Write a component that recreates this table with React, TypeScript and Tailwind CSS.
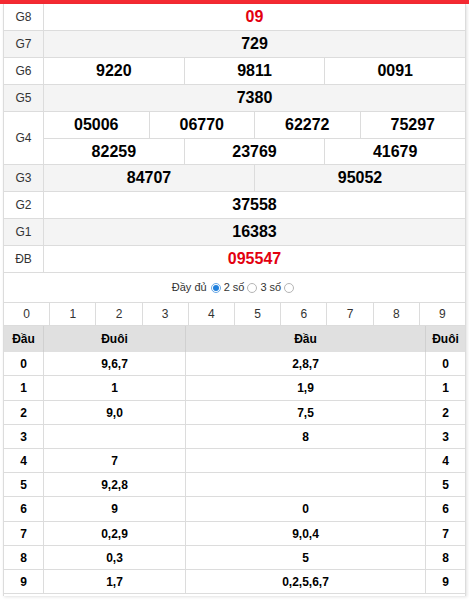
const prizes: { label: string; rows: string[][]; red?: boolean; gray?: boolean }[] = [
  { label: "G8", rows: [["09"]], red: true },
  { label: "G7", rows: [["729"]], gray: true },
  { label: "G6", rows: [["9220", "9811", "0091"]] },
  { label: "G5", rows: [["7380"]], gray: true },
  {
    label: "G4",
    rows: [
      ["05006", "06770", "62272", "75297"],
      ["82259", "23769", "41679"],
    ],
  },
  { label: "G3", rows: [["84707", "95052"]], gray: true },
  { label: "G2", rows: [["37558"]] },
  { label: "G1", rows: [["16383"]], gray: true },
  { label: "ĐB", rows: [["095547"]], red: true },
];

const loto: [string, string, string][] = [
  ["0", "9,6,7", "2,8,7"],
  ["1", "1", "1,9"],
  ["2", "9,0", "7,5"],
  ["3", "", "8"],
  ["4", "7", ""],
  ["5", "9,2,8", ""],
  ["6", "9", "0"],
  ["7", "0,2,9", "9,0,4"],
  ["8", "0,3", "5"],
  ["9", "1,7", "0,2,5,6,7"],
];

const Radio = ({ checked }: { checked?: boolean }) =>
  checked ? (
    <span className="mx-[3px] flex h-[10px] w-[10px] items-center justify-center rounded-full border border-[#6aa9e6] bg-white">
      <span className="h-[6px] w-[6px] rounded-full bg-[#1e7fdc]"></span>
    </span>
  ) : (
    <span className="mx-[3px] h-[10px] w-[10px] rounded-full border border-[#b5b5b5] bg-white"></span>
  );

const App = () => {
  return (
    <div className="h-[603px] w-[469px] bg-white font-['Liberation_Sans',Arial,sans-serif] text-[#222]">
      <div className="h-[4px] bg-[#f42a32]"></div>
      <div className="ml-[3px] w-[463px] border-x border-[#dcdcdc] pb-[2px] shadow-[1px_1px_3px_rgba(0,0,0,0.12)]">
        {/* ket qua */}
        <div className="flex flex-col">
          {prizes.map((p) => (
            <div
              key={p.label}
              className={`flex border-b border-[#dcdcdc] ${p.gray ? "bg-[#f4f4f4]" : "bg-white"}`}
            >
              <div className="flex w-[40px] shrink-0 items-center justify-center border-r border-[#dcdcdc] text-[12px] text-[#333]">
                {p.label}
              </div>
              <div className="flex flex-1 flex-col">
                {p.rows.map((r, i) => (
                  <div
                    key={i}
                    className={`flex h-[26px] ${i > 0 ? "border-t border-[#dcdcdc]" : ""}`}
                  >
                    {r.map((n, j) => (
                      <div
                        key={j}
                        className={`flex flex-1 items-center justify-center text-[16px] font-bold ${
                          j < r.length - 1 ? "border-r border-[#dcdcdc]" : ""
                        } ${p.red ? "text-[#e3000f]" : "text-black"}`}
                      >
                        {n}
                      </div>
                    ))}
                  </div>
                ))}
              </div>
            </div>
          ))}
        </div>

        <div className="flex h-[29px] items-center justify-center text-[11px] text-[#333]">
          <span className="mr-[1px]">Đầy đủ</span>
          <Radio checked />
          <span>2 số</span>
          <Radio />
          <span>3 số</span>
          <Radio />
        </div>

        {/* loto */}
        <div className="flex h-[24px] border-y border-[#dcdcdc] text-[12px] text-[#333]">
          {["0", "1", "2", "3", "4", "5", "6", "7", "8", "9"].map((d, i) => (
            <div
              key={d}
              className={`flex flex-1 items-center justify-center ${i < 9 ? "border-r border-[#dcdcdc]" : ""}`}
            >
              {d}
            </div>
          ))}
        </div>
        <div className="flex h-[26px] bg-[#e0e0e0] text-[12px] font-bold text-black">
          <div className="flex w-[40px] items-center justify-center border-r border-[#d0d0d0]">Đầu</div>
          <div className="flex w-[142px] items-center justify-center border-r border-[#d0d0d0]">Đuôi</div>
          <div className="flex w-[240px] items-center justify-center border-r border-[#d0d0d0]">Đầu</div>
          <div className="flex flex-1 items-center justify-center">Đuôi</div>
        </div>
        {loto.map(([d, duoi, dau], i) => (
          <div
            key={d}
            className={`flex border-b border-[#dcdcdc] text-[12px] font-bold text-black ${
              i === 1 || i === 6 ? "h-[25px]" : "h-[24px]"
            }`}
          >
            <div className="flex w-[40px] items-center justify-center border-r border-[#dcdcdc]">{d}</div>
            <div className="flex w-[142px] items-center justify-center border-r border-[#dcdcdc]">{duoi}</div>
            <div className="flex w-[240px] items-center justify-center border-r border-[#dcdcdc]">{dau}</div>
            <div className="flex flex-1 items-center justify-center">{d}</div>
          </div>
        ))}
      </div>
    </div>
  );
};

export default App;
